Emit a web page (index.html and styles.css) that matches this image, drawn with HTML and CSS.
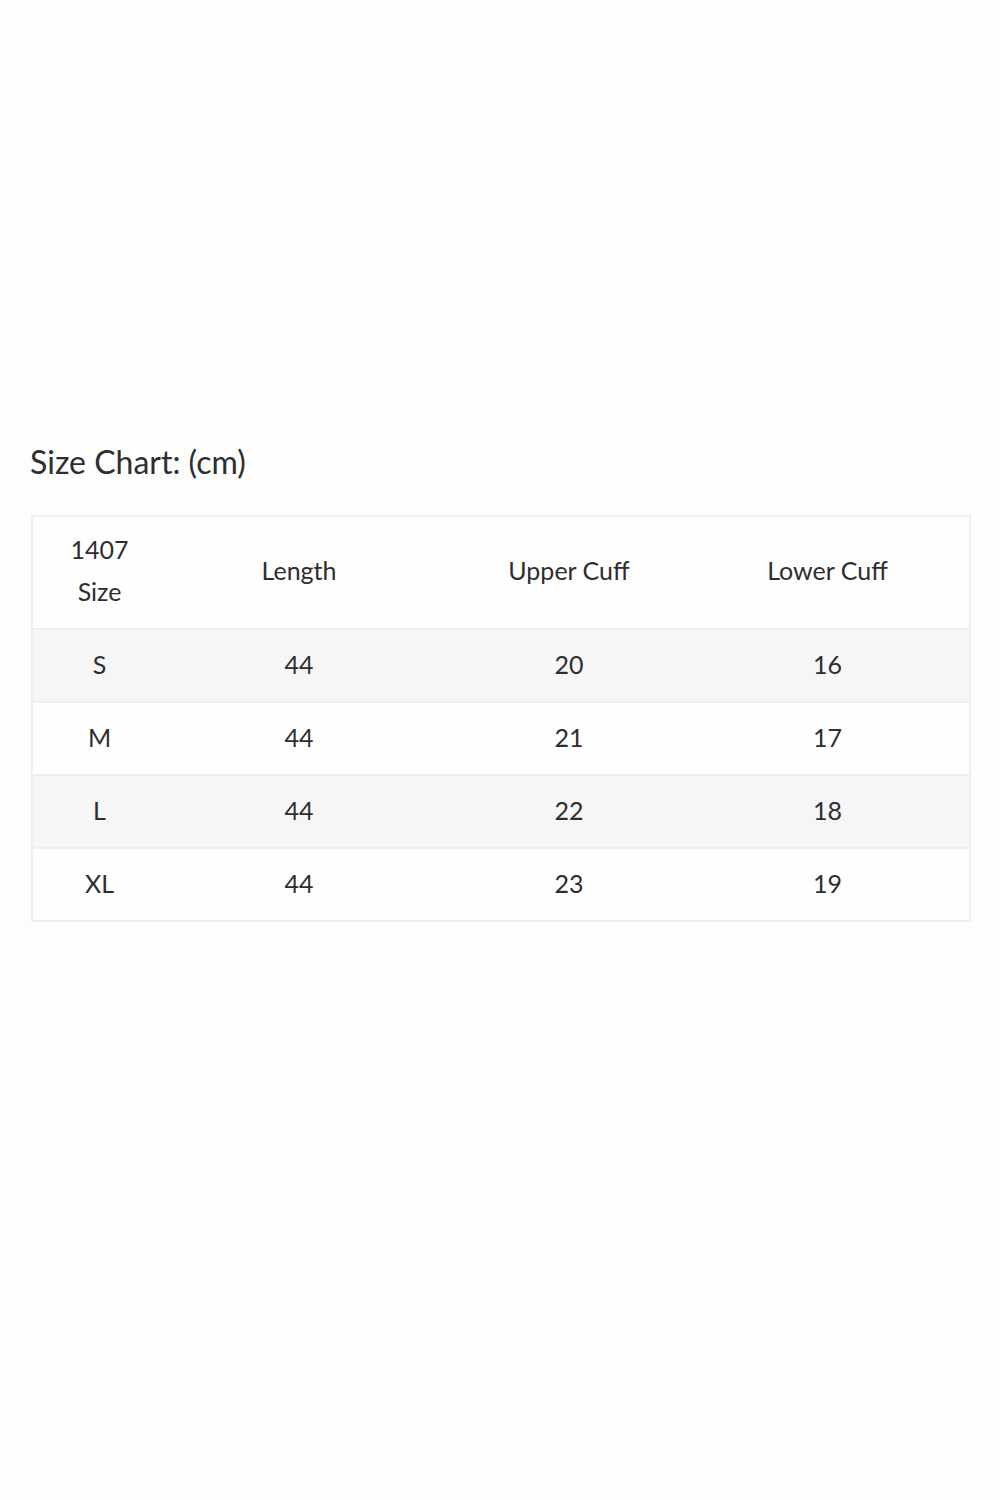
FILE: index.html
```html
<!DOCTYPE html>
<html>
<head>
<meta charset="utf-8">
<link rel="stylesheet" href="styles.css">
</head>
<body>
<div class="page">
  <h2 class="title">Size Chart: (cm)</h2>
  <table class="chart">
    <colgroup>
      <col class="c1"><col class="c2"><col class="c3"><col class="c4">
    </colgroup>
    <tr class="head"><td>1407<br>Size</td><td>Length</td><td>Upper Cuff</td><td>Lower Cuff</td></tr>
    <tr class="alt"><td>S</td><td>44</td><td>20</td><td>16</td></tr>
    <tr><td>M</td><td>44</td><td>21</td><td>17</td></tr>
    <tr class="alt"><td>L</td><td>44</td><td>22</td><td>18</td></tr>
    <tr><td>XL</td><td>44</td><td>23</td><td>19</td></tr>
  </table>
</div>
</body>
</html>
```
FILE: styles.css
```css
html, body {
  margin: 0;
  padding: 0;
  background: #fdfdfd;
}
.page {
  width: 1000px;
  height: 1500px;
  padding: 440px 30px 0 30px;
  box-sizing: border-box;
  font-family: Lato, "Open Sans", sans-serif;
  color: #2e2e2e;
}
.title {
  margin: 0;
  font-weight: 400;
  font-size: 32px;
  line-height: 44px;
}
.chart {
  margin-top: 31px;
  margin-left: 1px;
  width: 938px;
  border-collapse: collapse;
  border: 2px solid #efefef;
  font-size: 25px;
  table-layout: fixed;
}
.c1 { width: 134px; }
.c2 { width: 266px; }
.c3 { width: 274px; }
.c4 { width: 264px; }
.chart td {
  text-align: center;
  vertical-align: middle;
  height: 73px;
  padding: 0 0 3px 0;
  box-sizing: border-box;
  border-top: 2px solid #efefef;
}
.chart td:nth-child(4) {
  padding-right: 20px;
}
.chart .head td {
  height: 113px;
  line-height: 42px;
  padding-bottom: 6px;
  background: #fefefe;
  border-top: none;
}
.chart tr { background: #fefefe; }
.chart tr.alt { background: #f6f6f6; }
```
